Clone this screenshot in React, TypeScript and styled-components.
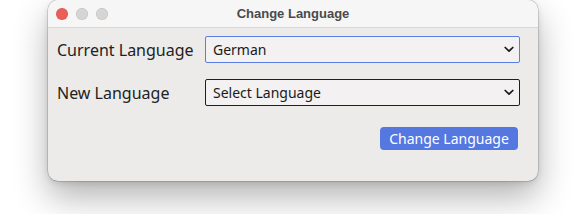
import React from "react";
import styled, { createGlobalStyle } from "styled-components";

const GlobalStyle = createGlobalStyle`
  html, body {
    margin: 0;
    padding: 0;
    background: #ffffff;
    font-family: "Noto Sans", "Open Sans", sans-serif;
  }
`;

const Page = styled.div`
  width: 586px;
  height: 214px;
  padding-left: 48px;
  box-sizing: border-box;
  overflow: hidden;
`;

const Window = styled.div`
  width: 490px;
  height: 181px;
  border-radius: 10px;
  background: #ecebe9;
  box-shadow: 0 0 0 0.5px rgba(0, 0, 0, 0.25), 0 16px 34px rgba(0, 0, 0, 0.3),
    0 2px 6px rgba(0, 0, 0, 0.12);
  overflow: hidden;
  display: flex;
  flex-direction: column;
`;

const TitleBar = styled.div`
  height: 27px;
  flex: none;
  background: #f6f6f6;
  border-bottom: 1px solid #d8d7d6;
  display: flex;
  align-items: center;
  position: relative;
  padding-left: 8px;
  gap: 8px;
`;

const Light = styled.span<{ $color: string }>`
  width: 12px;
  height: 12px;
  border-radius: 50%;
  background: ${({ $color }) => $color};
  box-shadow: inset 0 0 0 0.5px rgba(0, 0, 0, 0.12);
`;

const Title = styled.div`
  position: absolute;
  left: 0;
  right: 0;
  text-align: center;
  font-family: "Liberation Sans", "Noto Sans", sans-serif;
  font-weight: bold;
  font-size: 13px;
  color: #4a4a4a;
  pointer-events: none;
`;

const Body = styled.div`
  flex: 1;
  padding: 8px 18px 0 9px;
  display: flex;
  flex-direction: column;
`;

const Form = styled.div`
  display: grid;
  grid-template-columns: 148px 1fr;
  row-gap: 16px;
  align-items: center;
`;

const Label = styled.label`
  font-size: 16px;
  color: #222;
`;

const SelectWrap = styled.div`
  position: relative;
  height: 27px;
`;

const Select = styled.select<{ $focused?: boolean }>`
  appearance: none;
  width: 100%;
  height: 27px;
  box-sizing: border-box;
  border: 1px solid ${({ $focused }) => ($focused ? "#5a7ee0" : "#1f1f1f")};
  border-radius: 2px;
  background: #f3f1f1;
  font-family: "Noto Sans", sans-serif;
  font-size: 14px;
  color: #1a1a1a;
  padding: 0 24px 0 7px;
  outline: none;
`;

const Chevron = styled.svg`
  position: absolute;
  right: 6px;
  top: 10px;
  width: 10px;
  height: 7px;
  pointer-events: none;
`;

const Actions = styled.div`
  display: flex;
  justify-content: flex-end;
  margin-top: 21px;
  padding-right: 2px;
`;

const Button = styled.button`
  height: 23px;
  width: 138px;
  border: none;
  border-radius: 4px;
  background: #5577e0;
  color: #ffffff;
  font-family: "Noto Sans", sans-serif;
  font-size: 14px;
  padding: 0;
`;

const Arrow = () => (
  <Chevron viewBox="0 0 10 7">
    <path d="M1.2 1.5 L5 5.2 L8.8 1.5" fill="none" stroke="#1a1a1a" strokeWidth="1.7" strokeLinecap="round" strokeLinejoin="round" />
  </Chevron>
);

export default function App() {
  return (
    <Page>
      <GlobalStyle />
      <Window>
        <TitleBar>
          <Light $color="#ec5f57" />
          <Light $color="#d6d5d4" />
          <Light $color="#d6d5d4" />
          <Title>Change Language</Title>
        </TitleBar>
        <Body>
          <Form>
            <Label>Current Language</Label>
            <SelectWrap>
              <Select $focused defaultValue="German">
                <option>German</option>
                <option>English</option>
              </Select>
              <Arrow />
            </SelectWrap>
            <Label>New Language</Label>
            <SelectWrap>
              <Select defaultValue="">
                <option value="">Select Language</option>
                <option>English</option>
              </Select>
              <Arrow />
            </SelectWrap>
          </Form>
          <Actions>
            <Button>Change Language</Button>
          </Actions>
        </Body>
      </Window>
    </Page>
  );
}
